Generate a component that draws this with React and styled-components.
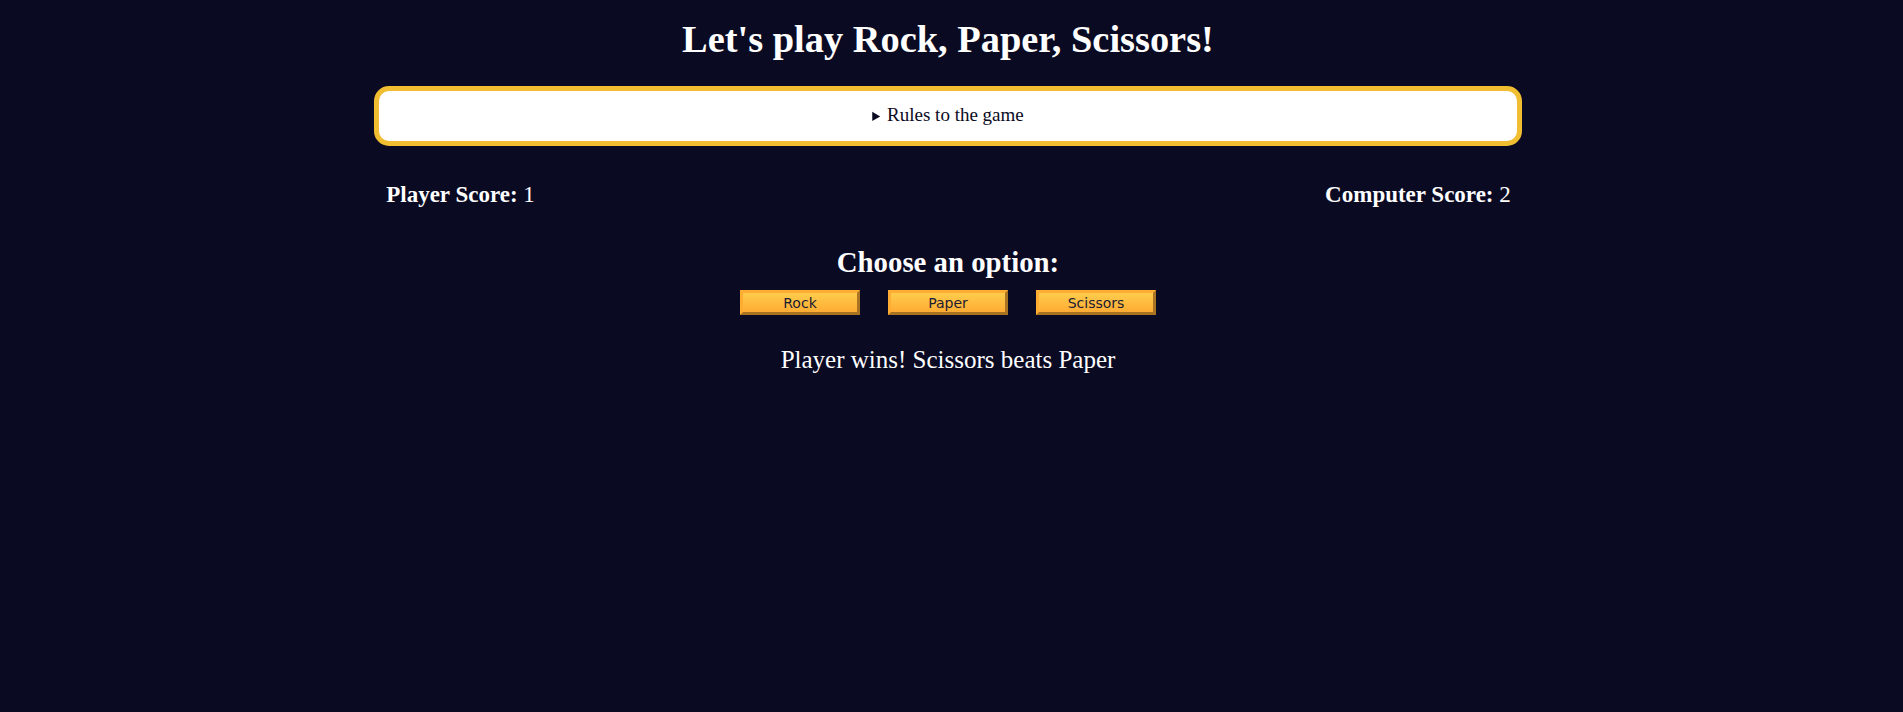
import styled, { createGlobalStyle } from 'styled-components';
import { useState } from 'react';

const GlobalStyle = createGlobalStyle`
  html, body {
    margin: 0;
    padding: 0;
    background-color: #0a0a23;
  }
  body {
    font-family: "Liberation Serif", "Times New Roman", serif;
    color: #ffffff;
  }
`;

const StPage = styled.main`
  padding: 0 7px 0 0;
  text-align: center;
`;

const StTitle = styled.h1`
  margin: 0;
  padding-top: 16px;
  font-size: 38.4px;
  line-height: 46px;
`;

const StRules = styled.details`
  width: 60%;
  margin: 24px auto 0;
  padding: 10px 0;
  border: 5px solid #f1be32;
  border-radius: 15px;
  background-color: #ffffff;
  color: #0a0a23;
  font-size: 19px;
  line-height: 28px;
`;

const StSummary = styled.summary`
  cursor: pointer;

  &::marker {
    font-size: 14px;
  }
`;

const StScoreRow = styled.div`
  box-sizing: border-box;
  width: calc(60% + 10px);
  margin: 34px auto 0;
  padding: 0 11px 0 12px;
  display: flex;
  justify-content: space-between;
  font-size: 23px;
  line-height: 30px;
`;

const StLabel = styled.strong`
  font-weight: bold;
`;

const StOptions = styled.section`
  margin-top: 35px;
`;

const StSubTitle = styled.h2`
  margin: 0;
  font-size: 28.8px;
  line-height: 34px;
`;

const StButtonRow = styled.div`
  display: flex;
  justify-content: center;
  gap: 28px;
  margin-top: 11px;
`;

const StButton = styled.button`
  width: 120px;
  height: 25px;
  box-sizing: border-box;
  padding: 0;
  cursor: pointer;
  font-family: "DejaVu Sans", Verdana, sans-serif;
  font-size: 14px;
  color: #1b1b32;
  background-color: #feac32;
  background-image: linear-gradient(#fecc4c, #ffac33);
  border: 3px outset #feac32;
`;

const StResult = styled.p`
  margin: 30px 0 0;
  font-size: 25px;
  line-height: 30px;
`;

const options = ['Rock', 'Paper', 'Scissors'];

const App = () => {
  const [playerScore] = useState(1);
  const [computerScore] = useState(2);
  const [result] = useState('Player wins! Scissors beats Paper');

  return (
    <StPage>
      <GlobalStyle />
      <StTitle>Let's play Rock, Paper, Scissors!</StTitle>
      <StRules>
        <StSummary>Rules to the game</StSummary>
        <p>You will be playing against the computer.</p>
      </StRules>
      <StScoreRow>
        <span>
          <StLabel>Player Score:</StLabel> {playerScore}
        </span>
        <span>
          <StLabel>Computer Score:</StLabel> {computerScore}
        </span>
      </StScoreRow>
      <StOptions>
        <StSubTitle>Choose an option:</StSubTitle>
        <StButtonRow>
          {options.map((option) => (
            <StButton key={option}>{option}</StButton>
          ))}
        </StButtonRow>
      </StOptions>
      <StResult>{result}</StResult>
    </StPage>
  );
};

export default App;
